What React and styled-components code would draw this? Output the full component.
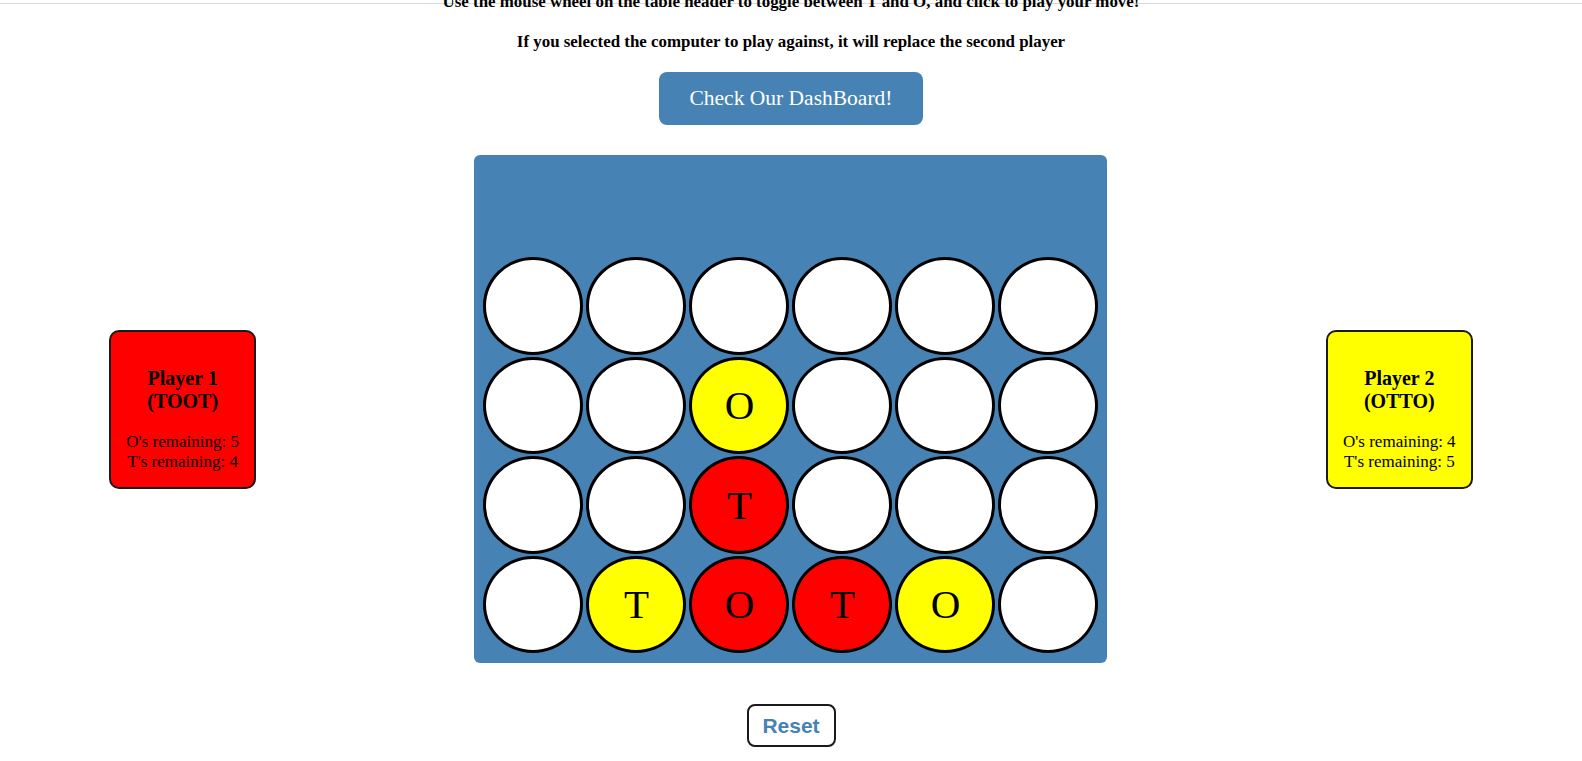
import React from 'react';
import styled, { createGlobalStyle } from 'styled-components';

const GlobalStyle = createGlobalStyle`
  html, body {
    margin: 0;
    padding: 0;
    overflow: hidden;
  }

  body {
    background: linear-gradient(#d9d9d9, #d9d9d9) 0 3px / 100% 1px no-repeat, #ffffff;
    font-family: "Liberation Serif", "Times New Roman", serif;
    color: #000000;
  }
`;

const Page = styled.div`
  width: 100%;
  text-align: center;
`;

const Instruction = styled.h4`
  font-size: 16.9px;
  font-weight: 700;
  line-height: 18.4px;
  margin: 21.28px 0;

  &:first-child {
    margin-top: -7px;
  }
`;

const DashButton = styled.button`
  display: block;
  margin: 0 auto;
  height: 53px;
  padding: 0 30px;
  background: #4682b4;
  color: #ffffff;
  border: none;
  border-radius: 8px;
  font-family: "Liberation Serif", "Times New Roman", serif;
  font-size: 21.5px;
  cursor: pointer;
`;

const GameRow = styled.div`
  display: flex;
  justify-content: space-around;
  align-items: center;
  margin-top: 30px;
`;

const PlayerCard = styled.div`
  width: 147px;
  box-sizing: border-box;
  background: ${props => props.color};
  border: 2px solid #1a1a1a;
  border-radius: 10px;
  padding: 0 8px;
  text-align: center;
`;

const PlayerName = styled.div`
  font-size: 20px;
  font-weight: 700;
  line-height: 23px;
  margin: 35px 0 19px;
`;

const Remaining = styled.div`
  font-size: 17px;
  line-height: 20px;
  margin-bottom: 15px;
`;

const Board = styled.div`
  width: 633px;
  box-sizing: border-box;
  background: #4682b4;
  border-radius: 6px;
  padding: 0 9px 10px;
`;

const BoardHeader = styled.div`
  height: 102px;
  cursor: ns-resize;
`;

const Grid = styled.div`
  display: grid;
  grid-template-columns: repeat(6, 100px);
  grid-auto-rows: 97.5px;
  column-gap: 3px;
  row-gap: 2px;
`;

const Cell = styled.div`
  box-sizing: border-box;
  border: 3px solid #000000;
  border-radius: 50%;
  background: ${props => props.fill};
  display: flex;
  align-items: center;
  justify-content: center;
  font-family: "Liberation Serif", "Times New Roman", serif;
  font-size: 41px;
  line-height: 1;
`;

const ResetButton = styled.button`
  display: block;
  margin: 41px auto 0;
  width: 89px;
  height: 43px;
  background: #ffffff;
  border: 2px solid #1a1a1a;
  border-radius: 8px;
  color: #4682b4;
  font-family: "Liberation Sans", Arial, sans-serif;
  font-weight: 700;
  font-size: 21px;
  cursor: pointer;
`;

const colors = { R: '#ff0000', Y: '#ffff00', W: '#ffffff' };

const board = [
  ['W', 'W', 'W', 'W', 'W', 'W'],
  ['W', 'W', 'Y:O', 'W', 'W', 'W'],
  ['W', 'W', 'R:T', 'W', 'W', 'W'],
  ['W', 'Y:T', 'R:O', 'R:T', 'Y:O', 'W'],
];

const players = [
  { name: 'Player 1', word: 'TOOT', color: '#ff0000', os: 5, ts: 4 },
  { name: 'Player 2', word: 'OTTO', color: '#ffff00', os: 4, ts: 5 },
];

const Player = ({ player }) => (
  <PlayerCard color={player.color}>
    <PlayerName>
      {player.name}
      <br />({player.word})
    </PlayerName>
    <Remaining>
      O's remaining: {player.os}
      <br />
      T's remaining: {player.ts}
    </Remaining>
  </PlayerCard>
);

const App = () => {
  return (
    <Page>
      <GlobalStyle />
      <Instruction>
        Use the mouse wheel on the table header to toggle between T and O, and click to play your move!
      </Instruction>
      <Instruction>If you selected the computer to play against, it will replace the second player</Instruction>
      <DashButton>Check Our DashBoard!</DashButton>

      <GameRow>
        <Player player={players[0]} />
        <Board>
          <BoardHeader />
          <Grid>
            {board.flat().map((cell, i) => {
              const [c, letter] = cell.split(':');
              return (
                <Cell key={i} fill={colors[c]}>
                  {letter}
                </Cell>
              );
            })}
          </Grid>
        </Board>
        <Player player={players[1]} />
      </GameRow>

      <ResetButton>Reset</ResetButton>
    </Page>
  );
};

export default App;
